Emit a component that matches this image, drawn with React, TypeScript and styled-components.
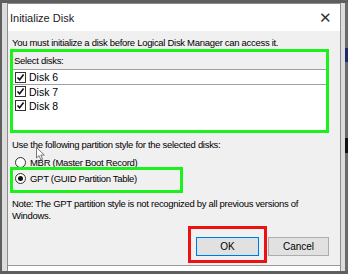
import React from 'react';
import styled, { createGlobalStyle } from 'styled-components';

const GlobalStyle = createGlobalStyle`
  html, body {
    margin: 0;
    padding: 0;
    background: #5e5e5e;
  }
  body {
    font-family: "Liberation Sans", Arial, sans-serif;
    color: #000;
  }
`;

const Screen = styled.div`
  width: 348px;
  height: 274px;
  box-sizing: border-box;
  padding: 3px 0 3px 2px;
  display: flex;
  background: #5e5e5e;
  position: relative;
  overflow: hidden;
`;

const Backdrop = styled.div`
  flex: 1;
  display: flex;
  background: #dcdcdc;
  padding-left: 5px;
  padding-right: 4px;
`;

const Window = styled.div`
  flex: 1;
  display: flex;
  flex-direction: column;
  border: 1px solid #8c8c8c;
  border-bottom: none;
  background: #f0f0f0;
`;

const TitleBar = styled.div`
  flex: 0 0 27px;
  display: flex;
  align-items: center;
  justify-content: space-between;
  padding: 0 8px 0 2px;
  background: #fff;
  font-size: 11px;
  color: #1a1a1a;
`;

const Close = styled.span`
  font-size: 15px;
  color: #333;
  line-height: 1;
`;

const Body = styled.div`
  flex: 1;
  min-height: 0;
  display: flex;
  flex-direction: column;
  padding: 6px 11px 0 2px;
  font-size: 9.5px;
  letter-spacing: -0.3px;
`;

const Text = styled.div<{ $mt?: number }>`
  padding-left: 2px;
  margin-top: ${({ $mt }) => $mt ?? 0}px;
  line-height: 12px;
`;

const Highlight = styled.div<{ $color: string }>`
  flex-shrink: 0;
  border: 3px solid ${({ $color }) => $color};
`;

const DiskGroup = styled(Highlight)`
  height: 78px;
  display: flex;
  flex-direction: column;
`;

const ListLabel = styled.div`
  height: 17px;
  padding-left: 1px;
  line-height: 17px;
  border-bottom: 1px solid #a0a0a0;
`;

const List = styled.div`
  flex: 1;
  background: #fff;
`;

const Row = styled.div<{ $focused?: boolean }>`
  display: flex;
  align-items: center;
  gap: 3px;
  height: ${({ $focused }) => ($focused ? 14 : 13)}px;
  padding-left: 2px;
  border-bottom: 1px solid ${({ $focused }) => ($focused ? '#a0a0a0' : 'transparent')};
  font-size: 10.5px;
  letter-spacing: 0;
`;

const Check = styled.span`
  width: 9px;
  height: 9px;
  border: 1px solid #333;
  display: flex;
  align-items: center;
  justify-content: center;
  background: #fff;
`;

const RadioRow = styled.div<{ $h?: number; $ml?: number }>`
  flex-shrink: 0;
  display: flex;
  align-items: center;
  gap: 4px;
  height: ${({ $h }) => $h ?? 16}px;
  padding-left: ${({ $ml }) => $ml ?? 0}px;
`;

const GptGroup = styled(Highlight)`
  align-self: flex-start;
  width: 165px;
  height: 20px;
  padding-left: 2px;
`;

const Radio = styled.span<{ $on?: boolean }>`
  width: 9px;
  height: 9px;
  border-radius: 50%;
  border: 1px solid #333;
  background: #fff;
  display: flex;
  align-items: center;
  justify-content: center;
  &::after {
    content: '';
    width: 5px;
    height: 5px;
    border-radius: 50%;
    background: ${({ $on }) => ($on ? '#111' : 'transparent')};
  }
`;

const Footer = styled.div`
  margin-top: 4px;
  display: flex;
  justify-content: flex-end;
  align-items: flex-start;
  gap: 1px;
`;

const RedBox = styled(Highlight)`
  padding: 8px 5px 4px;
`;

const Button = styled.button<{ $primary?: boolean }>`
  width: ${({ $primary }) => ($primary ? 63 : 61)}px;
  height: 19px;
  margin: ${({ $primary }) => ($primary ? 0 : '11px 0 0')};
  padding: 0;
  font-family: inherit;
  font-size: 10px;
  color: #000;
  background: #e1e1e1;
  border: 1px solid ${({ $primary }) => ($primary ? '#0078d7' : '#adadad')};
  box-shadow: ${({ $primary }) => ($primary ? 'inset 0 0 0 1px #cde4f7' : 'none')};
`;

const BottomEdge = styled.div`
  flex: 0 0 5px;
  background: #fff;
  border-top: 1px solid #9a9a9a;
`;

const SideStrip = styled.div`
  width: 3px;
  background: #6a6a6a;
  position: relative;
`;

const Thumb = styled.div<{ $top: number; $h: number; $c: string }>`
  position: absolute;
  left: 0;
  width: 3px;
  top: ${({ $top }) => $top}px;
  height: ${({ $h }) => $h}px;
  background: ${({ $c }) => $c};
`;

const Cursor = styled.svg`
  position: absolute;
  left: 36px;
  top: 147px;
`;

const Tick = () => (
  <svg width="9" height="9" viewBox="0 0 9 9">
    <path d="M1.5 4.5 L3.6 6.8 L7.6 1.6" fill="none" stroke="#111" strokeWidth="1.6" />
  </svg>
);

const disks = ['Disk 6', 'Disk 7', 'Disk 8'];

export default function App() {
  return (
    <>
      <GlobalStyle />
      <Screen>
        <Backdrop>
          <Window>
            <TitleBar>
              <span>Initialize Disk</span>
              <Close>✕</Close>
            </TitleBar>
            <Body>
              <Text>You must initialize a disk before Logical Disk Manager can access it.</Text>
              <DiskGroup $color="#1bf21b">
                <ListLabel>Select disks:</ListLabel>
                <List>
                  {disks.map((d, i) => (
                    <Row key={d} $focused={i === 0}>
                      <Check>
                        <Tick />
                      </Check>
                      {d}
                    </Row>
                  ))}
                </List>
              </DiskGroup>
              <Text $mt={6}>Use the following partition style for the selected disks:</Text>
              <RadioRow $h={10} $ml={5} style={{ marginTop: 6 }}>
                <Radio />
                MBR (Master Boot Record)
              </RadioRow>
              <GptGroup $color="#1bf21b">
                <RadioRow>
                  <Radio $on />
                  GPT (GUID Partition Table)
                </RadioRow>
              </GptGroup>
              <Text $mt={5}>
                Note: The GPT partition style is not recognized by all previous versions of
                <br />
                Windows.
              </Text>
              <Footer>
                <RedBox $color="#ee1111">
                  <Button $primary>OK</Button>
                </RedBox>
                <Button>Cancel</Button>
              </Footer>
            </Body>
            <BottomEdge />
          </Window>
        </Backdrop>
        <SideStrip>
          <Thumb $top={45} $h={14} $c="#1c2a6a" />
          <Thumb $top={135} $h={15} $c="#111" />
        </SideStrip>
        <Cursor width="10" height="14" viewBox="0 0 10 14">
          <path d="M0.5 0.5 L0.5 11 L3 8.6 L5 13 L6.6 12.2 L4.8 8 L8.3 8 Z" fill="#fff" stroke="#555" strokeWidth="0.8" />
        </Cursor>
      </Screen>
    </>
  );
}
